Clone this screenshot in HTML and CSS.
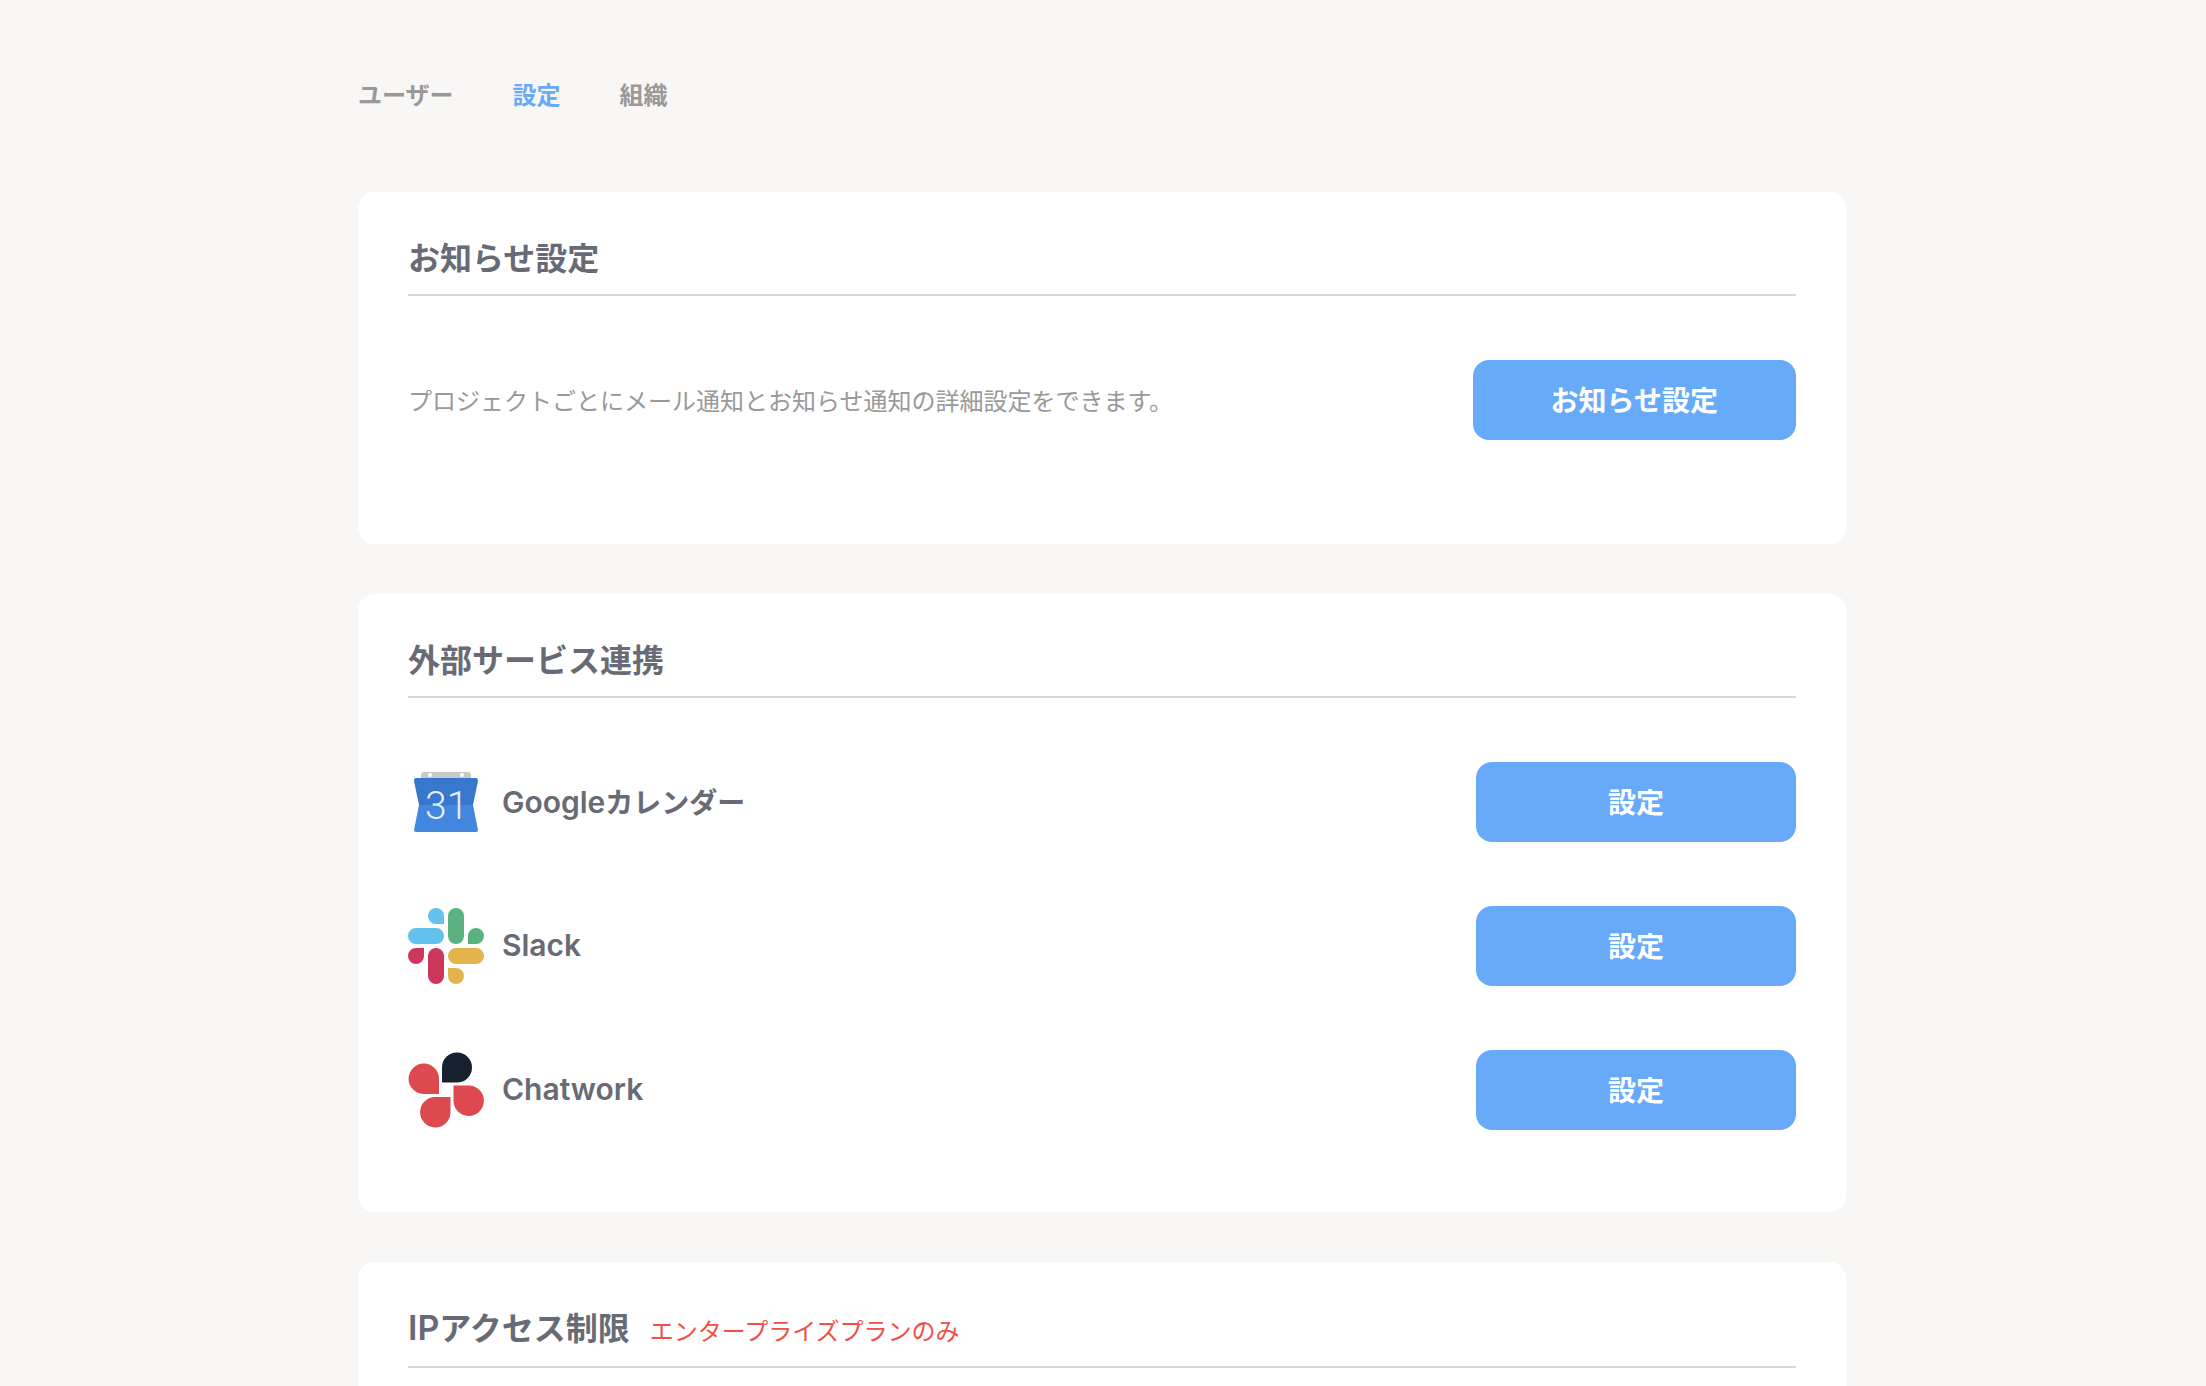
FILE: index.html
```html
<!DOCTYPE html>
<html lang="ja">
<head>
<meta charset="utf-8">
<meta name="viewport" content="width=device-width, initial-scale=1">
<title>設定</title>
<link rel="stylesheet" href="styles.css">
</head>
<body>
<div class="page">
  <nav class="tabs">
    <a class="tab" href="#user">ユーザー</a>
    <a class="tab tab-active" href="#settings" aria-current="page">設定</a>
    <a class="tab" href="#organization">組織</a>
  </nav>
  <main class="cards">
    <section class="card">
      <header class="card-header"><h2 class="card-title">お知らせ設定</h2></header>
      <div class="row">
        <p class="description">プロジェクトごとにメール通知とお知らせ通知の詳細設定をできます。</p>
        <button class="button" type="button">お知らせ設定</button>
      </div>
    </section>
    <section class="card">
      <header class="card-header"><h2 class="card-title">外部サービス連携</h2></header>
      <ul class="services">
        <li class="row">
          <div class="service">
            <svg class="logo" viewBox="0 0 76 76" aria-hidden="true">
              <path fill="#c7c7c7" d="M16 8H60Q63 8 63 11V16H13V11Q13 8 16 8Z"/>
              <circle cx="22" cy="11" r="2" fill="#fff"/>
              <circle cx="54" cy="11" r="2" fill="#fff"/>
              <path fill="#3777cd" d="M8 14H68Q70 14 70 17L65 41H11L6 17Q6 14 8 14Z"/>
              <path fill="#4287df" d="M11 41H65L70 66Q70 68 68 68H8Q6 68 6 66Z"/>
              <text class="logo-date" x="17" y="55">31</text>
            </svg>
            <span class="service-name">Google<span class="kana">カレンダー</span></span>
          </div>
          <button class="button" type="button">設定</button>
        </li>
        <li class="row">
          <div class="service">
            <svg class="logo" viewBox="0 0 76 76" aria-hidden="true">
              <path fill="#63c2ec" d="M28 0a8 8 0 0 1 8 8v8h-8a8 8 0 0 1 0-16ZM8 20H28a8 8 0 0 1 0 16H8a8 8 0 0 1 0-16Z"/>
              <path fill="#5bb281" d="M40 8a8 8 0 0 1 16 0V28a8 8 0 0 1-16 0ZM60 36V28a8 8 0 1 1 8 8Z"/>
              <path fill="#e3b34c" d="M48 40H68a8 8 0 0 1 0 16H48a8 8 0 0 1 0-16ZM40 60h8a8 8 0 1 1-8 8Z"/>
              <path fill="#cd375c" d="M16 40v8a8 8 0 1 1-8-8ZM20 48a8 8 0 0 1 16 0V68a8 8 0 0 1-16 0Z"/>
            </svg>
            <span class="service-name">Slack</span>
          </div>
          <button class="button" type="button">設定</button>
        </li>
        <li class="row">
          <div class="service">
            <svg class="logo" viewBox="0 0 76 76" aria-hidden="true">
              <path fill="#18212f" d="M34 30V15A15 15 0 1 1 49 30.500H34.500Z"/>
              <path fill="#dd494e" d="M31 42H15.500A15.200 15.200 0 1 1 31 27ZM45.500 33.500H61A15.200 15.200 0 1 1 45.500 49ZM42.500 45V60.500A15.200 15.200 0 1 1 27.500 45Z"/>
            </svg>
            <span class="service-name">Chatwork</span>
          </div>
          <button class="button" type="button">設定</button>
        </li>
      </ul>
    </section>
    <section class="card">
      <header class="card-header">
        <h2 class="card-title"><span class="latin">IP</span>アクセス制限</h2>
        <span class="plan-note">エンタープライズプランのみ</span>
      </header>
    </section>
  </main>
</div>
</body>
</html>
```
FILE: styles.css
```css
* {
  box-sizing: border-box;
}

body {
  margin: 0;
  padding-right: 2px;
  background: #f8f7f5;
  color: #686b75;
  font-family: "Noto Sans CJK JP", sans-serif;
}

.page {
  max-width: 1488px;
  margin: 0 auto;
  padding-top: 76px;
}

.tabs {
  display: flex;
  gap: 59px;
  margin-bottom: 80px;
}

.tab {
  color: #999;
  font-size: 24px;
  font-weight: 700;
  line-height: 36px;
  text-decoration: none;
}

.tab-active {
  color: #68aafa;
}

.cards {
  display: grid;
  gap: 50px;
}

.card {
  min-height: 352px;
  padding: 42px 50px 82px;
  border-radius: 16px;
  background: #fff;
}

.card-header {
  display: flex;
  align-items: baseline;
  gap: 20px;
  margin-bottom: 64px;
  padding-bottom: 16px;
  border-bottom: 2px solid #d8d8d8;
}

.card-title {
  margin: 0;
  font-size: 32px;
  font-weight: 700;
  line-height: 44px;
}

.latin {
  font-family: Inter, sans-serif;
  font-size: 34px;
  font-weight: 600;
}

.plan-note {
  color: #f05048;
  font-size: 24px;
  line-height: 40px;
}

.services {
  display: grid;
  gap: 64px;
  margin: 0;
  padding: 0;
  list-style: none;
}

.row {
  display: flex;
  align-items: center;
  justify-content: space-between;
  gap: 20px;
}

.description {
  margin: 0;
  color: #999;
  font-size: 24px;
  line-height: 36px;
}

.service {
  display: flex;
  align-items: center;
  gap: 18px;
}

.logo {
  width: 76px;
  height: 76px;
}

.logo-date {
  fill: #e8eef8;
  font-family: Roboto, sans-serif;
  font-size: 39px;
  font-weight: 300;
}

.service-name {
  padding-bottom: 2px;
  font-family: Inter, sans-serif;
  font-size: 30px;
  font-weight: 600;
  line-height: 48px;
}

.kana {
  font-family: "Noto Sans CJK JP", sans-serif;
  font-size: 28px;
  font-weight: 700;
}

.button {
  min-width: 320px;
  height: 80px;
  padding: 0 78px 3px;
  border: 0;
  border-radius: 16px;
  background: #68aafa;
  color: #fff;
  font-family: inherit;
  font-size: 28px;
  font-weight: 700;
  cursor: pointer;
}
```
